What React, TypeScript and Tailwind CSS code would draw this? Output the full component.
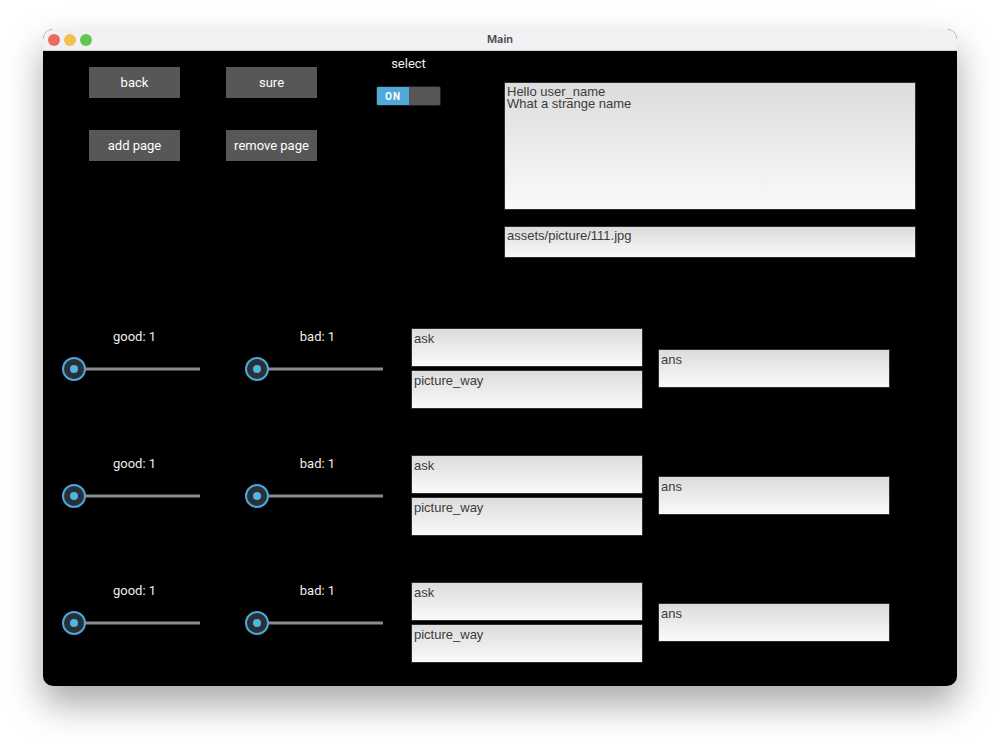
import React from 'react';

const rows = [0, 1, 2];

const Field: React.FC<{ text: string; className?: string }> = ({ text, className = '' }) => (
    <div
        className={`whitespace-pre-line border border-[#2e2e2e] bg-gradient-to-b from-[#dcdcdc] to-[#fafafa] px-[2px] text-[13px] leading-[12px] text-[#3c3c3c] ${className}`}
        style={{ fontFamily: '"Liberation Sans", Arial, sans-serif' }}
    >
        {text}
    </div>
);

const KivyButton: React.FC<{ label: string }> = ({ label }) => (
    <div className="flex h-[31px] w-[91px] items-center justify-center bg-[#575757] text-[13px] text-white">
        {label}
    </div>
);

const Slider: React.FC<{ label: string }> = ({ label }) => (
    <div className="flex w-[183px] flex-col items-center pt-[24px]">
        <span className="text-[13px] leading-[16px] text-[#eeeeee]">{label}</span>
        <svg width="183" height="26" viewBox="0 0 183 26" className="mt-[11px]">
            <rect x="31" y="11.5" width="126" height="3" fill="#8c8c8c" />
            <circle cx="31" cy="13" r="11" fill="#283038" stroke="#4ca6d8" strokeWidth="2" />
            <circle cx="31" cy="13" r="4" fill="#55b4e6" />
        </svg>
    </div>
);

export default function App() {
    return (
        <div className="h-[743px] w-[1000px] bg-white pl-[43px] pt-[29px]" style={{ fontFamily: 'Roboto, "Liberation Sans", sans-serif' }}>
            <div className="h-[657px] w-[914px] overflow-hidden rounded-[10px] bg-black shadow-[0_18px_36px_rgba(0,0,0,0.35)]">
                {/* title bar */}
                <div className="relative flex h-[22px] items-center justify-center border-b border-[#d2d2d2] bg-[#f1f1f3]">
                    <div className="absolute left-[5px] top-[5px] flex gap-[4px]">
                        <span className="h-[12px] w-[12px] rounded-full bg-[#ed6a5e]" />
                        <span className="h-[12px] w-[12px] rounded-full bg-[#f5bf4f]" />
                        <span className="h-[12px] w-[12px] rounded-full bg-[#61c554]" />
                    </div>
                    <span className="text-[11px] font-semibold text-[#4a4a4a]" style={{ fontFamily: 'Inter, "Liberation Sans", sans-serif' }}>
                        Main
                    </span>
                </div>

                {/* top section */}
                <div className="flex h-[254px]">
                    <div className="flex w-[183px] flex-col items-center gap-[32px] pt-[16px]">
                        <KivyButton label="back" />
                        <KivyButton label="add page" />
                    </div>
                    <div className="flex w-[91px] flex-col gap-[32px] pt-[16px]">
                        <KivyButton label="sure" />
                        <KivyButton label="remove page" />
                    </div>
                    <div className="flex w-[183px] flex-col items-center pt-[5px]">
                        <span className="text-[13px] leading-[16px] text-[#eeeeee]">select</span>
                        <div className="mt-[14px] flex h-[20px] w-[65px] overflow-hidden rounded-[2px] border border-[#222]">
                            <div className="flex w-[32px] items-center justify-center bg-[#4fa9dc] text-[10px] font-bold tracking-[1px] text-white">
                                ON
                            </div>
                            <div className="flex-1 bg-[#565656]" />
                        </div>
                    </div>
                    <div className="ml-[4px] flex w-[412px] flex-col gap-[16px] pt-[31px]">
                        <Field className="h-[128px] pt-[3px]" text={'Hello user_name\nWhat a strange name'} />
                        <Field className="h-[32px] pt-[3px]" text="assets/picture/111.jpg" />
                    </div>
                </div>

                {rows.map((r) => (
                    <div key={r} className="flex h-[127px] items-start">
                        <Slider label="good: 1" />
                        <Slider label="bad: 1" />
                        <div className="ml-[2px] flex w-[232px] flex-col gap-[3px] pt-[23px]">
                            <Field className="h-[39px] pt-[4px]" text="ask" />
                            <Field className="h-[39px] pt-[4px]" text="picture_way" />
                        </div>
                        <Field className="ml-[15px] mt-[44px] h-[39px] w-[232px] pt-[4px]" text="ans" />
                    </div>
                ))}
            </div>
        </div>
    );
}
